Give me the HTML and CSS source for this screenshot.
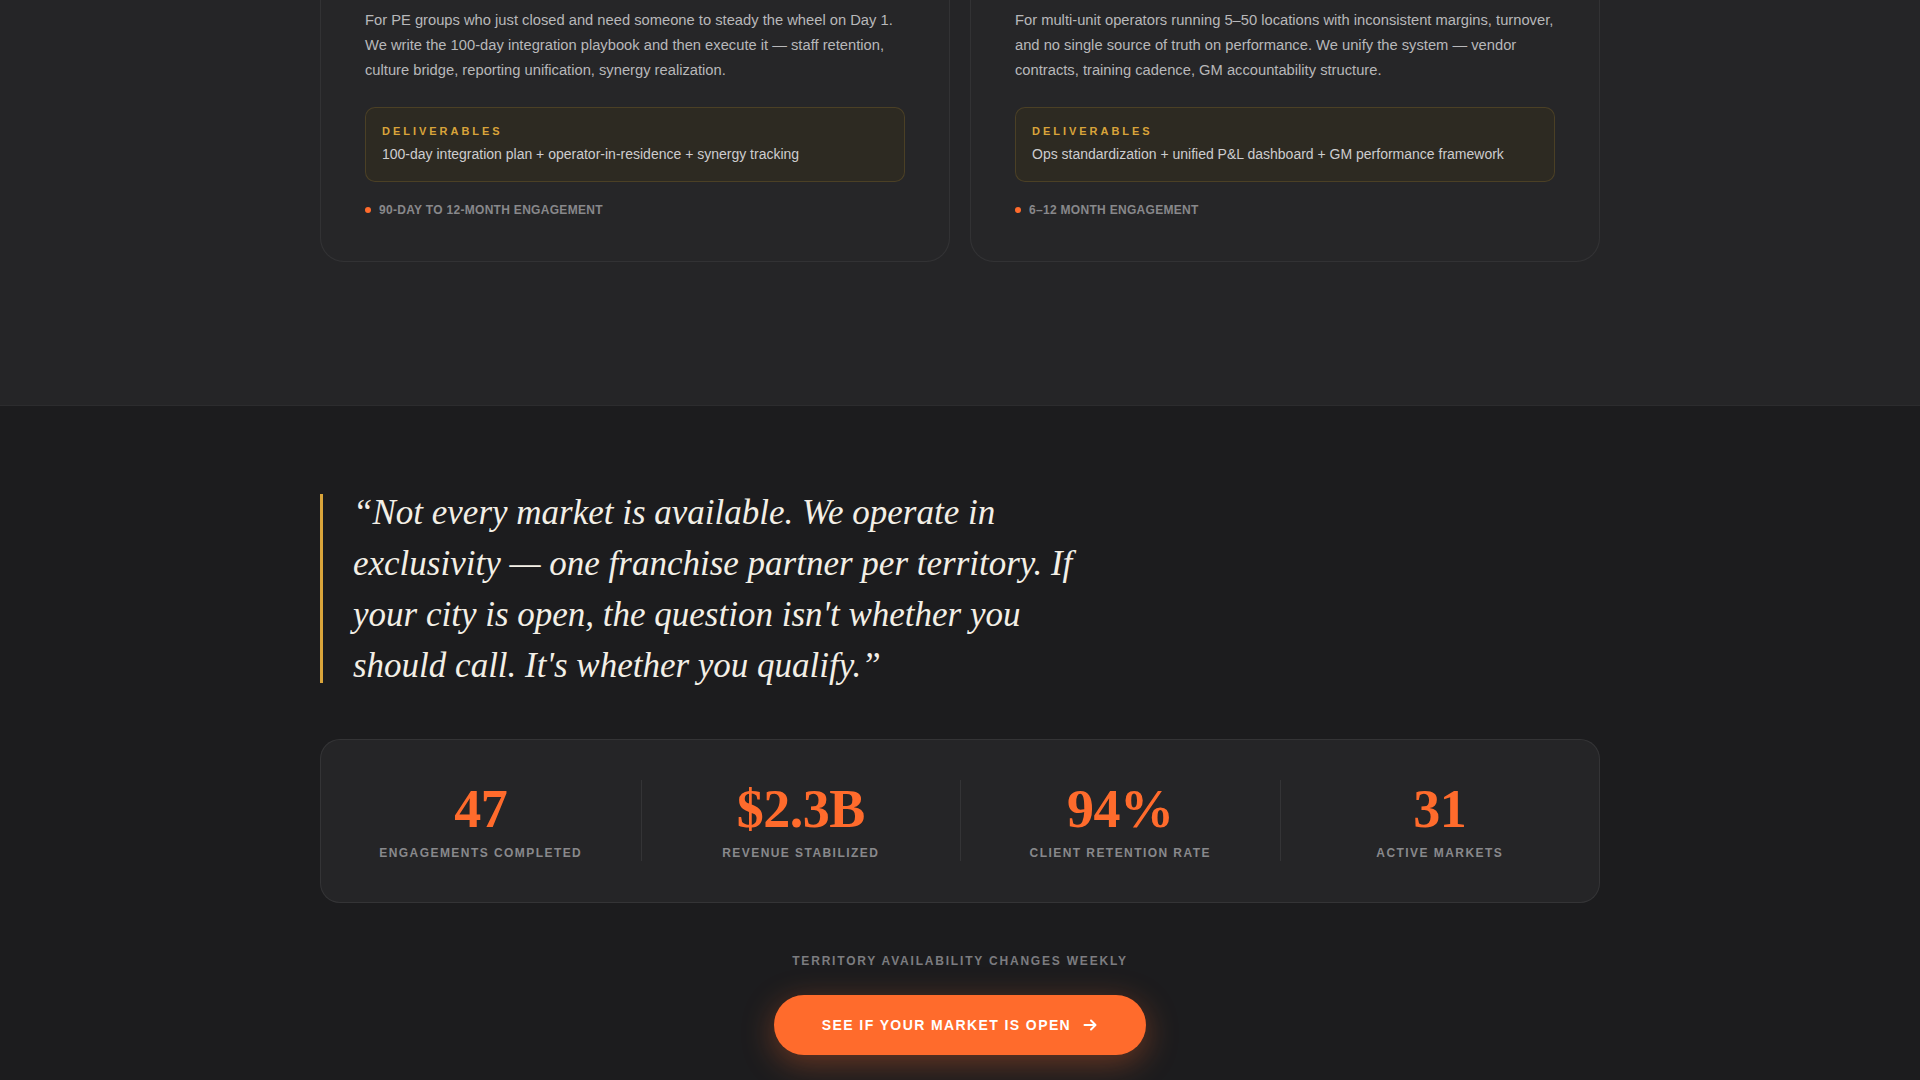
FILE: index.html
```html
<!DOCTYPE html>
<html lang="en">
<head>
	<meta charset="UTF-8">
	<meta name="viewport" content="width=device-width, initial-scale=1.0">
	<title>Operator Partners — Territories</title>
	<link rel="stylesheet" href="styles.css">
</head>
<body>
	<section class="services">
		<div class="wrap services-grid">
			<article class="service-card">
				<p class="service-desc">For PE groups who just closed and need someone to steady the wheel on Day 1. We write the 100-day integration playbook and then execute it — staff retention, culture bridge, reporting unification, synergy realization.</p>
				<div class="deliverables">
					<div class="deliverables-label">Deliverables</div>
					<div class="deliverables-text">100-day integration plan + operator-in-residence + synergy tracking</div>
				</div>
				<div class="engagement"><span class="dot"></span>90-Day to 12-Month Engagement</div>
			</article>
			<article class="service-card">
				<p class="service-desc">For multi-unit operators running 5–50 locations with inconsistent margins, turnover, and no single source of truth on performance. We unify the system — vendor contracts, training cadence, GM accountability structure.</p>
				<div class="deliverables">
					<div class="deliverables-label">Deliverables</div>
					<div class="deliverables-text">Ops standardization + unified P&amp;L dashboard + GM performance framework</div>
				</div>
				<div class="engagement"><span class="dot"></span>6–12 Month Engagement</div>
			</article>
		</div>
	</section>

	<section class="territory">
		<div class="wrap">
			<blockquote class="pull-quote">
				<span class="quote-bar"></span>
				<p>“Not every market is available. We operate in exclusivity — one franchise partner per territory. If your city is open, the question isn't whether you should call. It's whether you qualify.”</p>
			</blockquote>

			<div class="stats">
				<div class="stat">
					<div class="stat-num">47</div>
					<div class="stat-label">Engagements Completed</div>
				</div>
				<div class="stat">
					<div class="stat-num">$2.3B</div>
					<div class="stat-label">Revenue Stabilized</div>
				</div>
				<div class="stat">
					<div class="stat-num">94%</div>
					<div class="stat-label">Client Retention Rate</div>
				</div>
				<div class="stat">
					<div class="stat-num">31</div>
					<div class="stat-label">Active Markets</div>
				</div>
			</div>

			<div class="cta">
				<p class="cta-note">Territory availability changes weekly</p>
				<a class="cta-btn" href="#apply">
					See if your market is open
					<svg width="16" height="16" viewBox="0 0 16 16" fill="none" stroke="currentColor" stroke-width="2" stroke-linecap="round" stroke-linejoin="round"><path d="M2.5 8h10.5M9 3.5l4.5 4.5L9 12.5"/></svg>
				</a>
			</div>
		</div>
	</section>
</body>
</html>
```

FILE: styles.css
```css
* {
	box-sizing: border-box;
}
body {
	margin: 0;
	background-color: #1c1c1e;
	color: #b4b4b6;
	font-family: "Liberation Sans", Arial, sans-serif;
}
p {
	margin: 0;
}
.wrap {
	width: 1280px;
	margin: 0 auto;
}

/* services */
.services {
	background-color: #252527;
	border-bottom: 1px solid #2c2c2e;
	padding-bottom: 143px;
}
.services-grid {
	display: grid;
	grid-template-columns: 1fr 1fr;
	gap: 20px;
}
.service-card {
	background-color: rgba(255, 255, 255, 0.008);
	border: 1px solid rgba(255, 255, 255, 0.06);
	border-top: none;
	border-radius: 0 0 24px 24px;
	padding: 8px 44px 43px;
}
.service-desc {
	font-size: 14.72px;
	line-height: 25px;
	color: #b8b8ba;
	margin-bottom: 24px;
}
.deliverables {
	background-color: #2d2a22;
	border: 1px solid rgba(217, 165, 58, 0.18);
	border-radius: 10px;
	padding: 17px 16px;
}
.deliverables-label {
	font-size: 11px;
	line-height: 13px;
	font-weight: bold;
	letter-spacing: 0.27em;
	text-transform: uppercase;
	color: #d9a43a;
	margin-bottom: 6px;
}
.deliverables-text {
	font-size: 14px;
	line-height: 20px;
	color: #cdcdcf;
}
.engagement {
	display: flex;
	align-items: center;
	gap: 8px;
	margin-top: 20px;
	font-size: 12px;
	line-height: 16px;
	font-weight: bold;
	letter-spacing: 0.025em;
	text-transform: uppercase;
	color: #88888b;
}
.dot {
	width: 6px;
	height: 6px;
	border-radius: 50%;
	background-color: #ff6b2c;
}

/* territory */
.territory {
	padding: 81px 0 80px;
}
.pull-quote {
	display: flex;
	gap: 30px;
	margin: 0;
}
.quote-bar {
	flex: none;
	width: 3px;
	margin: 7px 0 8px;
	background-color: #d9a43a;
}
.pull-quote p {
	width: 735px;
	font-family: "Liberation Serif", "Times New Roman", serif;
	font-style: italic;
	font-size: 35px;
	line-height: 51px;
	color: #f3efe6;
}

.stats {
	display: grid;
	grid-template-columns: repeat(4, 1fr);
	margin-top: 48px;
	padding: 40px 0 41px;
	background-color: #252527;
	border: 1px solid rgba(255, 255, 255, 0.07);
	border-radius: 20px;
}
.stat {
	text-align: center;
	border-left: 1px solid rgba(255, 255, 255, 0.07);
}
.stat:first-child {
	border-left: none;
}
.stat-num {
	font-family: "Liberation Serif", "Times New Roman", serif;
	font-weight: bold;
	font-size: 54px;
	line-height: 58px;
	letter-spacing: -0.01em;
	color: #ff6b2c;
}
.stat-label {
	margin-top: 7px;
	font-size: 12px;
	line-height: 16px;
	font-weight: bold;
	letter-spacing: 0.12em;
	text-transform: uppercase;
	color: #89898c;
}

.cta {
	display: flex;
	flex-direction: column;
	align-items: center;
	margin-top: 50px;
}
.cta-note {
	font-size: 12px;
	line-height: 16px;
	font-weight: bold;
	letter-spacing: 0.15em;
	text-transform: uppercase;
	color: #7c7c80;
}
.cta-btn {
	display: inline-flex;
	align-items: center;
	gap: 11px;
	margin-top: 26px;
	padding: 22px 48px;
	background-color: #ff6b2c;
	border-radius: 999px;
	color: #fff;
	text-decoration: none;
	font-size: 14px;
	line-height: 16px;
	font-weight: bold;
	letter-spacing: 0.1em;
	text-transform: uppercase;
	box-shadow: 0 8px 32px rgba(255, 107, 44, 0.35);
}
```
